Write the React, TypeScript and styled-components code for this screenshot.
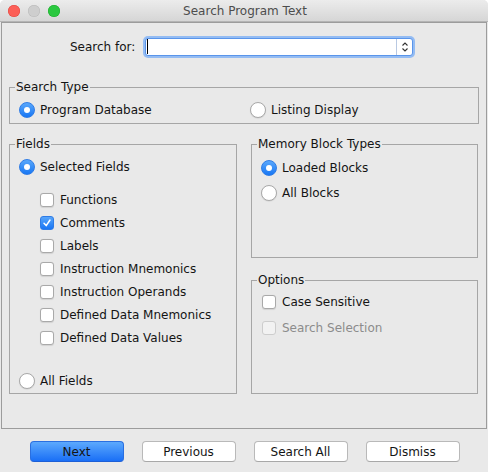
import React from 'react';
import styled, { createGlobalStyle } from 'styled-components';

const Global = createGlobalStyle`
  html, body { margin: 0; padding: 0; background: #ffffff; }
  body {
    font-family: "DejaVu Sans", "Liberation Sans", sans-serif;
    font-size: 12px;
    color: #141414;
  }
  * { box-sizing: border-box; }
`;

const Window = styled.div`
  width: 488px;
  height: 472px;
  display: flex;
  flex-direction: column;
  background: #e9e9e9;
  border-radius: 5px 5px 0 0;
  overflow: hidden;
`;

const TitleBar = styled.div`
  position: relative;
  height: 22px;
  flex: none;
  display: flex;
  align-items: center;
  justify-content: center;
  background: linear-gradient(#ececec, #d6d6d6);
  border-bottom: 1px solid #b4b4b4;
  color: #4d4d4d;
  font-size: 12px;
  padding-left: 2px;
`;

const Lights = styled.div`
  position: absolute;
  left: 8px;
  top: 5px;
  display: flex;
  gap: 8px;
`;

const Light = styled.span<{ $color: string; $edge: string }>`
  width: 12px;
  height: 12px;
  border-radius: 50%;
  background: ${(p) => p.$color};
  box-shadow: inset 0 0 0 0.5px ${(p) => p.$edge};
`;

const Panel = styled.div`
  margin: 0 1px;
  height: 407px;
  flex: none;
  border: 1px solid #9c9c9c;
  padding: 12px 7px 0;
  display: flex;
  flex-direction: column;
`;

const SearchRow = styled.div`
  display: flex;
  align-items: center;
  gap: 10px;
  height: 23px;
  padding-left: 61px;
`;

const Label = styled.span`
  white-space: nowrap;
`;

const InputBox = styled.div`
  width: 268px;
  height: 18px;
  display: flex;
  background: #fff;
  border: 1px solid #5a95ea;
  border-radius: 3px;
  box-shadow: 0 0 0 2px #94bcf3;
`;

const TextArea = styled.div`
  flex: 1;
  display: flex;
  align-items: center;
  padding-left: 1px;
`;

const Caret = styled.span`
  width: 1px;
  height: 15px;
  background: #000;
`;

const Spinner = styled.div`
  width: 16px;
  border-left: 1px solid #b9c9e2;
  display: flex;
  align-items: center;
  justify-content: center;
`;

const Group = styled.fieldset<{ $top?: number }>`
  margin: ${(p) => p.$top ?? 0}px 0 0;
  padding: 0;
  min-width: 0;
  border: 1px solid #a6a6a6;
  display: flex;
  flex-direction: column;
`;

const Legend = styled.legend`
  margin-left: 5px;
  padding: 0 1px;
  line-height: 15px;
  font-size: 12px;
  color: #141414;
`;

const TypeBody = styled.div`
  display: grid;
  grid-template-columns: 231px 1fr;
  padding: 6px 9px 4px;
`;

const Columns = styled.div`
  margin-top: 13px;
  display: grid;
  grid-template-columns: 228px 227px;
  column-gap: 14px;
  height: 257px;
`;

const RightCol = styled.div`
  display: grid;
  grid-template-rows: 121px 121px;
  row-gap: 15px;
`;

const GroupBody = styled.div<{ $top: number; $gap: number; $bottom?: number }>`
  flex: 1;
  display: flex;
  flex-direction: column;
  gap: ${(p) => p.$gap}px;
  padding: ${(p) => p.$top}px 9px ${(p) => p.$bottom ?? 0}px;
`;

const Option = styled.label<{ $disabled?: boolean; $indent?: number; $push?: boolean }>`
  display: flex;
  align-items: center;
  gap: 5px;
  height: 18px;
  margin-left: ${(p) => p.$indent ?? 0}px;
  margin-top: ${(p) => (p.$push ? 'auto' : '0')};
  color: ${(p) => (p.$disabled ? '#8c8c8c' : '#141414')};
  white-space: nowrap;
`;

const CheckList = styled.div`
  display: flex;
  flex-direction: column;
  margin-top: 12px;
`;

const CheckRow = styled(Option)`
  height: 23px;
`;

const Slot = styled.span`
  width: 16px;
  height: 16px;
  flex: none;
  display: flex;
  align-items: center;
  justify-content: center;
`;

const RadioDot = styled.span<{ $on?: boolean }>`
  width: 16px;
  height: 16px;
  border-radius: 50%;
  display: flex;
  align-items: center;
  justify-content: center;
  background: ${(p) => (p.$on ? 'linear-gradient(#5aa8fb, #1877f4)' : '#ffffff')};
  border: 1px solid ${(p) => (p.$on ? '#2f7ce6' : '#a9a9a9')};
  box-shadow: ${(p) => (p.$on ? 'none' : '0 0.5px 1px rgba(0,0,0,0.12)')};
  &::after {
    content: '';
    display: ${(p) => (p.$on ? 'block' : 'none')};
    width: 6px;
    height: 6px;
    border-radius: 50%;
    background: #fff;
  }
`;

const Box = styled.span<{ $on?: boolean; $disabled?: boolean }>`
  width: 14px;
  height: 14px;
  border-radius: 3px;
  display: flex;
  align-items: center;
  justify-content: center;
  background: ${(p) =>
    p.$on ? 'linear-gradient(#58a6fb, #1976f4)' : p.$disabled ? '#f2f2f2' : '#ffffff'};
  border: 1px solid ${(p) => (p.$on ? '#2f7ce6' : p.$disabled ? '#cdcdcd' : '#a9a9a9')};
  box-shadow: ${(p) => (p.$on || p.$disabled ? 'none' : '0 0.5px 1px rgba(0,0,0,0.1)')};
`;

const ButtonBar = styled.div`
  display: flex;
  justify-content: center;
  gap: 18px;
  padding-top: 12px;
  padding-left: 1px;
`;

const Button = styled.button<{ $primary?: boolean }>`
  width: 94px;
  height: 21px;
  padding: 0;
  font-family: inherit;
  font-size: 12px;
  color: #141414;
  border-radius: 4px;
  border: 1px solid ${(p) => (p.$primary ? '#2a6fe0' : '#b9b9b9')};
  border-bottom-color: ${(p) => (p.$primary ? '#1d5fd6' : '#a8a8a8')};
  background: ${(p) => (p.$primary ? 'linear-gradient(#5ca9fd, #1a6ff6)' : '#ffffff')};
`;

const Radio = ({ on }: { on?: boolean }) => (
  <Slot>
    <RadioDot $on={on} />
  </Slot>
);

const Check = ({ on, disabled }: { on?: boolean; disabled?: boolean }) => (
  <Slot>
    <Box $on={on} $disabled={disabled}>
      {on && (
        <svg width="10" height="10" viewBox="0 0 10 10">
          <path d="M2 5.2 L4.2 7.6 L8 2" fill="none" stroke="#fff" strokeWidth="1.5" strokeLinecap="round" strokeLinejoin="round" />
        </svg>
      )}
    </Box>
  </Slot>
);

const fields: { label: string; on?: boolean }[] = [
  { label: 'Functions' },
  { label: 'Comments', on: true },
  { label: 'Labels' },
  { label: 'Instruction Mnemonics' },
  { label: 'Instruction Operands' },
  { label: 'Defined Data Mnemonics' },
  { label: 'Defined Data Values' },
];

export default function App() {
  return (
    <>
      <Global />
      <Window>
        <TitleBar>
          <Lights>
            <Light $color="#fc5f57" $edge="#e0443e" />
            <Light $color="#cecece" $edge="#b8b8b8" />
            <Light $color="#2bc840" $edge="#1aab29" />
          </Lights>
          Search Program Text
        </TitleBar>
        <Panel>
          <SearchRow>
            <Label>Search for:</Label>
            <InputBox>
              <TextArea>
                <Caret />
              </TextArea>
              <Spinner>
                <svg width="8" height="12" viewBox="0 0 8 12">
                  <path d="M1.5 4.5 L4 2 L6.5 4.5 M1.5 7.5 L4 10 L6.5 7.5" fill="none" stroke="#333" strokeWidth="1.1" />
                </svg>
              </Spinner>
            </InputBox>
          </SearchRow>

          <Group $top={22}>
            <Legend>Search Type</Legend>
            <TypeBody>
              <Option>
                <Radio on />
                Program Database
              </Option>
              <Option>
                <Radio />
                Listing Display
              </Option>
            </TypeBody>
          </Group>

          <Columns>
            <Group>
              <Legend>Fields</Legend>
              <GroupBody $top={6} $gap={0} $bottom={3}>
                <Option>
                  <Radio on />
                  Selected Fields
                </Option>
                <CheckList>
                  {fields.map((f) => (
                    <CheckRow key={f.label} $indent={20}>
                      <Check on={f.on} />
                      {f.label}
                    </CheckRow>
                  ))}
                </CheckList>
                <Option $push>
                  <Radio />
                  All Fields
                </Option>
              </GroupBody>
            </Group>
            <RightCol>
              <Group>
                <Legend>Memory Block Types</Legend>
                <GroupBody $top={7} $gap={7}>
                  <Option>
                    <Radio on />
                    Loaded Blocks
                  </Option>
                  <Option>
                    <Radio />
                    All Blocks
                  </Option>
                </GroupBody>
              </Group>
              <Group>
                <Legend>Options</Legend>
                <GroupBody $top={5} $gap={8}>
                  <Option>
                    <Check />
                    Case Sensitive
                  </Option>
                  <Option $disabled>
                    <Check disabled />
                    Search Selection
                  </Option>
                </GroupBody>
              </Group>
            </RightCol>
          </Columns>
        </Panel>
        <ButtonBar>
          <Button $primary>Next</Button>
          <Button>Previous</Button>
          <Button>Search All</Button>
          <Button>Dismiss</Button>
        </ButtonBar>
      </Window>
    </>
  );
}
